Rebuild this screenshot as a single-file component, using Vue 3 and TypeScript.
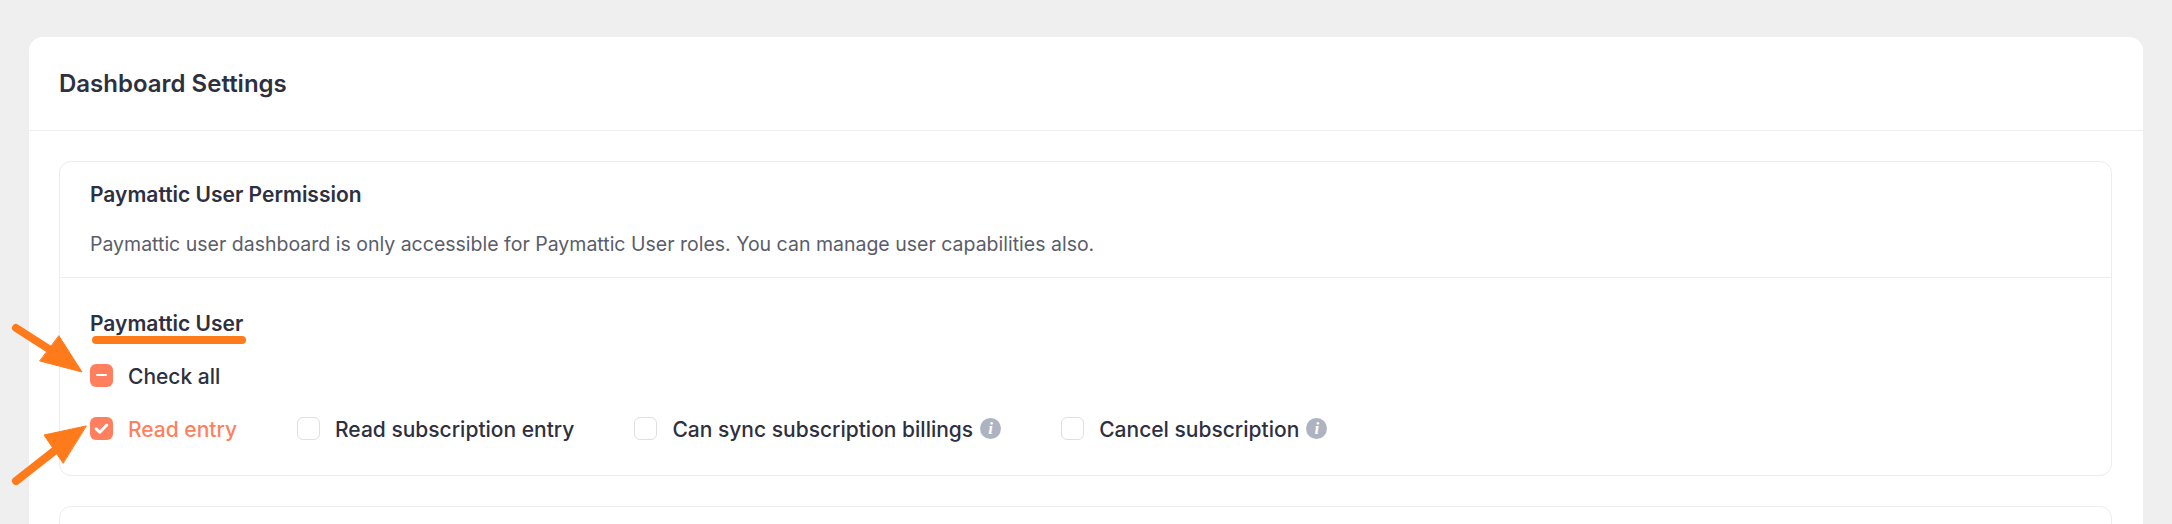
<script setup lang="ts">
interface Item { label: string; state: 'checked' | 'empty'; info?: boolean }
const items: Item[] = [
  { label: 'Read entry', state: 'checked' },
  { label: 'Read subscription entry', state: 'empty' },
  { label: 'Can sync subscription billings', state: 'empty', info: true },
  { label: 'Cancel subscription', state: 'empty', info: true },
]
</script>

<template>
  <div class="page">
    <section class="panel">
      <header class="panel-head"><h1>Dashboard Settings</h1></header>
      <div class="panel-body">
        <div class="card">
          <div class="card-head">
            <h2>Paymattic User Permission</h2>
            <p>Paymattic user dashboard is only accessible for Paymattic User roles. You can manage user capabilities also.</p>
          </div>
          <div class="card-body">
            <h3>Paymattic User</h3>
            <label class="check all">
              <span class="box on">
                <svg viewBox="0 0 23 23" width="23" height="23"><path d="M7 11h9" stroke="#fff" stroke-width="2" stroke-linecap="round" fill="none" /></svg>
              </span>
              <span class="txt">Check all</span>
            </label>
            <div class="row">
              <label v-for="it in items" :key="it.label" class="check" :class="{ active: it.state === 'checked' }">
                <span class="box" :class="{ on: it.state === 'checked' }">
                  <svg v-if="it.state === 'checked'" viewBox="0 0 23 23" width="23" height="23"><path d="M6.2 11.8l3.6 3.4 7-7.2" stroke="#fff" stroke-width="3" stroke-linecap="round" stroke-linejoin="round" fill="none" /></svg>
                </span>
                <span class="txt">{{ it.label }}</span>
                <span v-if="it.info" class="info">i</span>
              </label>
            </div>
          </div>
        </div>
        <div class="card next"></div>
      </div>
    </section>
    <svg class="marks" width="300" height="524" viewBox="0 0 300 524">
      <g fill="#ff7a1a" stroke="#ff7a1a" stroke-linecap="round" stroke-linejoin="round">
        <path d="M96 340H242" stroke-width="8" fill="none" />
        <path d="M16 328L52 351" stroke-width="8" fill="none" />
        <path d="M59 336L82 372L40 361Z" stroke-width="1" />
        <path d="M16 481L58 448" stroke-width="8" fill="none" />
        <path d="M86 426L44 435L63 463Z" stroke-width="1" />
      </g>
    </svg>
  </div>
</template>

<style>
html, body { margin: 0; background: #efefef; }
</style>

<style scoped>
.page {
  position: relative;
  height: 524px;
  overflow: hidden;
  padding: 37px 29px 0;
  box-sizing: border-box;
  background: #efefef;
  font-family: Inter, "Liberation Sans", sans-serif;
  color: #2e3040;
}
.panel {
  background: #fff;
  border-radius: 14px 14px 0 0;
  height: 600px;
}
.panel-head {
  height: 94px;
  box-sizing: border-box;
  border-bottom: 1px solid #eeeff1;
  padding-left: 30px;
  display: flex;
  align-items: center;
}
h1 { margin: 0; font-size: 24px; font-weight: 600; }
.panel-body { padding: 30px 31px 0 30px; }
.card {
  border: 1px solid #ecedf0;
  border-radius: 12px;
}
.card-head {
  padding: 21px 30px 0;
  height: 116px;
  box-sizing: border-box;
  border-bottom: 1px solid #ecedf0;
}
h2 { margin: 0; font-size: 21px; line-height: 24px; font-weight: 600; }
p { margin: 25px 0 0; font-size: 19.5px; line-height: 24px; color: #5a5d6a; }
.card-body { padding: 33px 30px 0; height: 197px; box-sizing: border-box; }
h3 { margin: 0 0 27px; font-size: 21px; line-height: 26px; font-weight: 600; }
.row { display: flex; gap: 60px; margin-top: 30px; }
.check {
  display: flex;
  align-items: flex-start;
  gap: 15px;
  height: 23px;
  font-size: 21px;
  font-weight: 500;
  white-space: nowrap;
}
.txt { line-height: 25px; }
.active { color: #ff7f5e; }
.box {
  width: 23px;
  height: 23px;
  box-sizing: border-box;
  border: 1px solid #dcdfe6;
  border-radius: 6px;
  background: #fff;
  display: block;
  flex: none;
}
.box.on { border: 0; background: #ff7f5e; }
.box svg { display: block; }
.info {
  width: 21px;
  height: 21px;
  margin: 1px 0 0 -8px;
  border-radius: 50%;
  background: #adb3c0;
  color: #fff;
  font: italic 700 17px/21px "Liberation Serif", serif;
  text-align: center;
}
.next { margin-top: 30px; height: 60px; }
.marks { position: absolute; left: 0; top: 0; pointer-events: none; }
</style>
